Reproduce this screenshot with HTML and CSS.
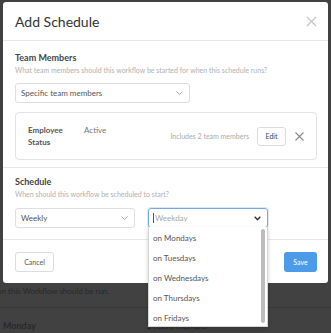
FILE: index.html
```html
<!DOCTYPE html>
<html lang="en">
<head>
    <meta charset="UTF-8">
    <meta name="viewport" content="width=device-width, initial-scale=1.0">
    <title>Add Schedule</title>
    <link rel="stylesheet" href="styles.css">
</head>
<body>
    <!-- Dimmed page behind the modal -->
    <div id="page">
        <p class="page-note">on this Workflow should be run.</p>
        <div class="page-row">
            <span class="page-day">Monday</span>
            <span class="page-count">1 team member</span>
        </div>
    </div>

    <div id="modal">
        <div class="modal-header">
            <h2>Add Schedule</h2>
            <svg class="close-icon" width="11" height="11" viewBox="0 0 11 11">
                <path d="M1 1 L10 10 M10 1 L1 10" stroke="#c4c4c4" stroke-width="1.2" fill="none"/>
            </svg>
        </div>

        <div class="modal-section">
            <div class="field-label">Team Members</div>
            <div class="field-help">What team members should this workflow be started for when this schedule runs?</div>
            <div class="select select-wide">
                <span>Specific team members</span>
                <svg width="7" height="4" viewBox="0 0 7 4"><path d="M0.5 0.5 L3.5 3.5 L6.5 0.5" stroke="#aaa" fill="none"/></svg>
            </div>
            <div class="rule-card">
                <div class="rule-name">Employee<br>Status</div>
                <div class="rule-value">Active</div>
                <div class="rule-count">Includes 2 team members</div>
                <button class="btn btn-edit">Edit</button>
                <svg class="rule-remove" width="9" height="9" viewBox="0 0 9 9">
                    <path d="M0.5 0.5 L8.5 8.5 M8.5 0.5 L0.5 8.5" stroke="#8a8a8a" stroke-width="1.1" fill="none"/>
                </svg>
            </div>
        </div>

        <div class="modal-section section-schedule">
            <div class="field-label">Schedule</div>
            <div class="field-help">When should this workflow be scheduled to start?</div>
            <div class="select-row">
                <div class="select">
                    <span>Weekly</span>
                    <svg width="7" height="4" viewBox="0 0 7 4"><path d="M0.5 0.5 L3.5 3.5 L6.5 0.5" stroke="#aaa" fill="none"/></svg>
                </div>
                <div class="select select-open">
                    <span class="placeholder"><i class="caret"></i>Weekday</span>
                    <svg width="7" height="5" viewBox="0 0 7 5"><path d="M0.7 0.8 L3.5 3.8 L6.3 0.8" stroke="#333" stroke-width="1.4" fill="none"/></svg>
                </div>
            </div>
        </div>

        <div class="modal-footer">
            <button class="btn btn-cancel">Cancel</button>
            <button class="btn btn-save">Save</button>
        </div>
    </div>

    <!-- Open weekday menu -->
    <ul id="day-menu">
        <li>on Mondays</li>
        <li>on Tuesdays</li>
        <li>on Wednesdays</li>
        <li>on Thursdays</li>
        <li>on Fridays</li>
    </ul>
</body>
</html>
```

FILE: styles.css
```css
body {
    margin: 0;
    width: 331px;
    height: 333px;
    overflow: hidden;
    background-color: #414141;
    font-family: Lato, "Open Sans", sans-serif;
    position: relative;
}

/* Page behind the overlay */
#page {
    padding-top: 286px;
    color: #292929;
}
.page-note {
    margin: 0 0 0 -3px;
    font-size: 8px;
    line-height: 10px;
    height: 21px;
    border-bottom: 1px solid #383838;
}
.page-row {
    display: flex;
    padding: 12px 0 0 3px;
    font-size: 9px;
    line-height: 12px;
}
.page-day {
    width: 143px;
    font-weight: 700;
}

/* Modal */
#modal {
    position: absolute;
    left: 3px;
    top: 2px;
    width: 325px;
    height: 281px;
    background-color: #fff;
    border-radius: 3px;
    color: #555;
}
.modal-header {
    height: 38px;
    border-bottom: 1px solid #e6e6e6;
    display: flex;
    align-items: center;
    justify-content: space-between;
    padding: 0 11px 0 12px;
}
.modal-header h2 {
    margin: 0;
    font-size: 14px;
    font-weight: 400;
    color: #333;
}
.modal-section {
    padding: 11px 11px 7px 12px;
    border-bottom: 1px solid #e6e6e6;
}
.section-schedule {
    padding-top: 8px;
    padding-bottom: 11px;
}
.field-label {
    font-size: 9px;
    font-weight: 700;
    line-height: 12px;
    color: #444;
}
.field-help {
    margin-top: 1px;
    font-size: 7px;
    line-height: 11px;
    color: #b0b0b0;
}

/* Selects */
.select {
    box-sizing: border-box;
    width: 120px;
    height: 20px;
    border: 1px solid #dedede;
    border-radius: 3px;
    display: flex;
    align-items: center;
    justify-content: space-between;
    padding: 0 6px 0 5px;
    font-size: 8px;
    color: #555;
}
.select-wide {
    width: 175px;
    margin-top: 7px;
}
.select-row {
    display: flex;
    gap: 13px;
    margin-top: 8px;
}
.select-open {
    border-color: #74a9e6;
    box-shadow: 0 0 0 1px rgba(116, 169, 230, 0.25);
    padding-left: 4px;
}
.placeholder {
    color: #a8a8a8;
    display: flex;
    align-items: center;
}
.caret {
    display: inline-block;
    width: 1px;
    height: 10px;
    background-color: #555;
    margin-right: 1px;
}

/* Filter card */
.rule-card {
    margin-top: 9px;
    height: 48px;
    box-sizing: border-box;
    border: 1px solid #e3e3e3;
    border-radius: 4px;
    display: flex;
    align-items: center;
    padding: 0 12px 0 12px;
}
.rule-name {
    width: 56px;
    font-size: 8px;
    font-weight: 700;
    line-height: 12px;
    color: #555;
}
.rule-value {
    align-self: flex-start;
    margin-top: 11px;
    flex: 1;
    font-size: 8px;
    line-height: 12px;
    color: #777;
}
.rule-count {
    font-size: 7px;
    color: #aaa;
    margin-right: 8px;
}
.btn {
    box-sizing: border-box;
    height: 20px;
    border-radius: 3px;
    font-family: inherit;
    font-size: 7px;
    padding: 0;
    cursor: pointer;
}
.btn-edit {
    width: 29px;
    height: 19px;
    background-color: #fff;
    border: 1px solid #dcdcdc;
    color: #444;
    margin-right: 9px;
}

/* Footer */
.modal-footer {
    display: flex;
    justify-content: space-between;
    padding: 12px 11px 0 12px;
}
.btn-cancel {
    width: 39px;
    background-color: #fff;
    border: 1px solid #dcdcdc;
    color: #555;
}
.btn-save {
    width: 33px;
    background-color: #4b9be9;
    border: none;
    color: #fff;
}

/* Dropdown menu */
#day-menu {
    position: absolute;
    left: 148px;
    top: 227px;
    width: 120px;
    height: 100px;
    box-sizing: border-box;
    margin: 0;
    padding: 1px 0 0 0;
    list-style: none;
    background-color: #fff;
    border: 1px solid #d6d6d6;
    border-top: none;
    box-shadow: 0 2px 4px rgba(0, 0, 0, 0.2);
    overflow: hidden;
}
#day-menu::after {
    content: "";
    position: absolute;
    right: 2px;
    top: 2px;
    width: 4px;
    height: 94px;
    border-radius: 2px;
    background-color: #bdbdbd;
}
#day-menu li {
    height: 20px;
    line-height: 20px;
    padding-left: 4px;
    font-size: 8px;
    color: #555;
}
```
